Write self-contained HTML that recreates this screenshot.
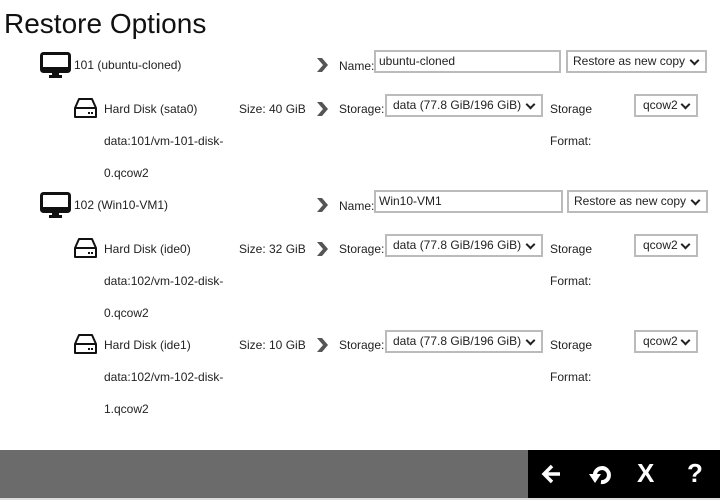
<!DOCTYPE html>
<html><head><style>
body{margin:0;width:720px;height:500px;background:#fff;font-family:"Liberation Sans",Arial,sans-serif;font-size:12px;color:#222;position:relative;overflow:hidden}
.a{position:absolute;white-space:nowrap}
.t{position:absolute;white-space:nowrap;line-height:14px}
.box{position:absolute;border:2px solid #bbb;box-sizing:border-box;height:23px;font-size:12px;line-height:18px;padding-left:3px;color:#222;background:#fff}
.sel::after{content:"";position:absolute;right:7px;top:5px;width:5px;height:5px;border-right:2px solid #222;border-bottom:2px solid #222;transform:rotate(45deg)}
.chev{position:absolute;width:12px;height:14px}
</style></head><body>
<div class="a" style="left:4px;top:6px;font-size:28px;line-height:36px;color:#111">Restore Options</div>

<!-- VM 101 -->
<svg class="a" style="left:40px;top:52px" width="31" height="27" viewBox="0 0 31 27"><rect x="1.5" y="1.5" width="28" height="18" rx="2" fill="none" stroke="#111" stroke-width="3"/><rect x="1.5" y="15" width="28" height="5" fill="#111"/><rect x="12" y="20" width="7" height="4" fill="#111"/><rect x="9" y="23" width="13" height="3" fill="#111"/></svg>
<div class="t" style="left:74px;top:58px">101 (ubuntu-cloned)</div>
<svg class="chev" style="left:316px;top:58px" viewBox="0 0 12 14"><path d="M1 0H6L12 7L6 14H1L7 7Z" fill="#555"/></svg>
<div class="t" style="left:339px;top:59px">Name:</div>
<div class="box" style="left:374px;top:50px;width:187px">ubuntu-cloned</div>
<div class="box sel" style="left:566px;top:50px;width:141px;padding-left:5px">Restore as new copy</div>

<svg class="a" style="left:74px;top:97px" width="23" height="23" viewBox="0 0 23 23"><path d="M5 2H18L22 11V20H1V11Z" fill="none" stroke="#111" stroke-width="2" stroke-linejoin="round"/><path d="M1 11H22" stroke="#111" stroke-width="2"/><rect x="14" y="15" width="2" height="2" fill="#111"/><rect x="17" y="15" width="2" height="2" fill="#111"/></svg>
<div class="t" style="left:104px;top:102px">Hard Disk (sata0)</div>
<div class="t" style="left:239px;top:102px">Size: 40 GiB</div>
<svg class="chev" style="left:316px;top:102px" viewBox="0 0 12 14"><path d="M1 0H6L12 7L6 14H1L7 7Z" fill="#555"/></svg>
<div class="t" style="left:339px;top:102px">Storage:</div>
<div class="box sel" style="left:385px;top:94px;width:158px;padding-left:6px">data (77.8 GiB/196 GiB)</div>
<div class="t" style="left:550px;top:102px">Storage</div>
<div class="t" style="left:550px;top:134px">Format:</div>
<div class="box sel" style="left:634px;top:94px;width:64px;padding-left:7px">qcow2</div>
<div class="t" style="left:104px;top:134px">data:101/vm-101-disk-</div>
<div class="t" style="left:104px;top:166px">0.qcow2</div>

<!-- VM 102 -->
<svg class="a" style="left:40px;top:192px" width="31" height="27" viewBox="0 0 31 27"><rect x="1.5" y="1.5" width="28" height="18" rx="2" fill="none" stroke="#111" stroke-width="3"/><rect x="1.5" y="15" width="28" height="5" fill="#111"/><rect x="12" y="20" width="7" height="4" fill="#111"/><rect x="9" y="23" width="13" height="3" fill="#111"/></svg>
<div class="t" style="left:74px;top:198px">102 (Win10-VM1)</div>
<svg class="chev" style="left:316px;top:198px" viewBox="0 0 12 14"><path d="M1 0H6L12 7L6 14H1L7 7Z" fill="#555"/></svg>
<div class="t" style="left:339px;top:199px">Name:</div>
<div class="box" style="left:374px;top:190px;width:189px">Win10-VM1</div>
<div class="box sel" style="left:567px;top:190px;width:141px;padding-left:5px">Restore as new copy</div>

<svg class="a" style="left:74px;top:237px" width="23" height="23" viewBox="0 0 23 23"><path d="M5 2H18L22 11V20H1V11Z" fill="none" stroke="#111" stroke-width="2" stroke-linejoin="round"/><path d="M1 11H22" stroke="#111" stroke-width="2"/><rect x="14" y="15" width="2" height="2" fill="#111"/><rect x="17" y="15" width="2" height="2" fill="#111"/></svg>
<div class="t" style="left:104px;top:242px">Hard Disk (ide0)</div>
<div class="t" style="left:239px;top:242px">Size: 32 GiB</div>
<svg class="chev" style="left:316px;top:242px" viewBox="0 0 12 14"><path d="M1 0H6L12 7L6 14H1L7 7Z" fill="#555"/></svg>
<div class="t" style="left:339px;top:242px">Storage:</div>
<div class="box sel" style="left:385px;top:234px;width:158px;padding-left:6px">data (77.8 GiB/196 GiB)</div>
<div class="t" style="left:550px;top:242px">Storage</div>
<div class="t" style="left:550px;top:274px">Format:</div>
<div class="box sel" style="left:634px;top:234px;width:64px;padding-left:7px">qcow2</div>
<div class="t" style="left:104px;top:274px">data:102/vm-102-disk-</div>
<div class="t" style="left:104px;top:306px">0.qcow2</div>

<svg class="a" style="left:74px;top:333px" width="23" height="23" viewBox="0 0 23 23"><path d="M5 2H18L22 11V20H1V11Z" fill="none" stroke="#111" stroke-width="2" stroke-linejoin="round"/><path d="M1 11H22" stroke="#111" stroke-width="2"/><rect x="14" y="15" width="2" height="2" fill="#111"/><rect x="17" y="15" width="2" height="2" fill="#111"/></svg>
<div class="t" style="left:104px;top:338px">Hard Disk (ide1)</div>
<div class="t" style="left:239px;top:338px">Size: 10 GiB</div>
<svg class="chev" style="left:316px;top:338px" viewBox="0 0 12 14"><path d="M1 0H6L12 7L6 14H1L7 7Z" fill="#555"/></svg>
<div class="t" style="left:339px;top:338px">Storage:</div>
<div class="box sel" style="left:385px;top:330px;width:158px;padding-left:6px">data (77.8 GiB/196 GiB)</div>
<div class="t" style="left:550px;top:338px">Storage</div>
<div class="t" style="left:550px;top:370px">Format:</div>
<div class="box sel" style="left:634px;top:330px;width:64px;padding-left:7px">qcow2</div>
<div class="t" style="left:104px;top:370px">data:102/vm-102-disk-</div>
<div class="t" style="left:104px;top:402px">1.qcow2</div>

<!-- bottom bar -->
<div class="a" style="left:0;top:450px;width:720px;height:48px;background:#6b6b6b"></div>
<div class="a" style="left:0;top:498px;width:720px;height:2px;background:#ddd"></div>
<div class="a" style="left:528px;top:450px;width:192px;height:48px;background:#000"></div>
<svg class="a" style="left:540px;top:462px" width="24" height="24" viewBox="0 0 24 24"><path d="M20 12H5M12 4L4 12L12 20" fill="none" stroke="#fff" stroke-width="3.5" stroke-linejoin="miter"/></svg>
<svg class="a" style="left:587px;top:461px" width="26" height="26" viewBox="0 0 26 26"><path d="M8 15A7 7 0 1 1 14 21" fill="none" stroke="#fff" stroke-width="4"/><path d="M2 13H14L8 22Z" fill="#fff"/></svg>
<div class="a" style="left:637px;top:458px;color:#fff;font-weight:bold;font-size:26px;line-height:30px">X</div>
<div class="a" style="left:687px;top:458px;color:#fff;font-weight:bold;font-size:26px;line-height:30px">?</div>
</body></html>
